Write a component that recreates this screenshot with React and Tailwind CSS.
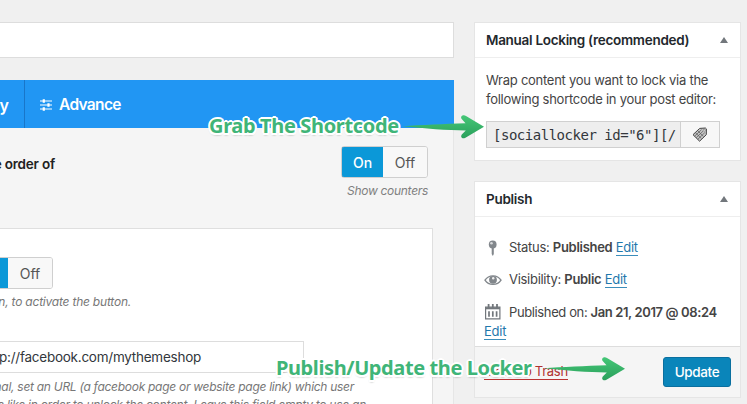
import React from "react";

function Toggle({ className = "" }) {
  return (
    <div className={`flex h-8 w-[87px] shrink-0 overflow-hidden rounded-[3px] border border-[#cfcfcf] text-[14px] ${className}`}>
      <div className="-my-px -ml-px flex w-[42px] items-center justify-center rounded-l-[3px] border border-r-0 border-[#0a6ea3] bg-[#0b98d8] font-medium text-white">
        On
      </div>
      <div className="flex flex-1 items-center justify-center bg-[#f8f8f8] text-[#555]">Off</div>
    </div>
  );
}

function Panel({ title, className = "", children }) {
  return (
    <section className={`flex w-[267px] flex-col border border-[#e5e5e5] bg-white ${className}`}>
      <header className="flex h-[35px] shrink-0 items-center justify-between border-b border-[#eeeeee] pr-[12px] pl-[11px]">
        <h2 className="pt-px text-[13.5px] font-semibold whitespace-nowrap text-[#23282d]">{title}</h2>
        <svg className="h-[6px] w-[8px]" viewBox="0 0 8 6">
          <path d="M4 0 8 6H0z" fill="#72777c" />
        </svg>
      </header>
      {children}
    </section>
  );
}

function Edit() {
  return <a className="border-b border-[#3b8dbb] text-[#1f78ac]">Edit</a>;
}

function Pin() {
  return (
    <svg className="h-[16px] w-[18px]" viewBox="0 0 18 16">
      <path d="M7.7 8h2.1v6l-1 2-1.1-2z" fill="#82878c" />
      <circle cx="8.7" cy="4.5" r="3.9" fill="#82878c" />
      <circle cx="7.5" cy="3.2" r="1.3" fill="#d6d8da" />
    </svg>
  );
}

function Eye() {
  return (
    <svg className="h-[14px] w-[18px]" viewBox="0 0 18 14" fill="none">
      <path d="M1 7.2C4.6 1.4 13.4 1.4 17 7.2 13.4 12.8 4.6 12.8 1 7.2z" stroke="#82878c" strokeWidth="1.4" />
      <circle cx="9" cy="6.8" r="3.9" fill="#82878c" />
      <circle cx="9.2" cy="5.2" r="1.2" fill="#eee" />
    </svg>
  );
}

function Calendar() {
  return (
    <svg className="-mt-[3px] h-[17px] w-[18px]" viewBox="0 0 18 17" fill="none" stroke="#72777c">
      <path d="M1.6 4.2h14.3v11.6H1.6z" strokeWidth="1.2" />
      <path d="M1.6 5.3h14.3" strokeWidth="2" />
      <path d="M4.6 1v4M8.8 1v4M13 1v4" strokeWidth="1.8" />
      <path d="M5 8.2v5.5M8.8 8.2v5.5M12.6 8.2v5.5" strokeWidth="1.7" />
    </svg>
  );
}

function Tag() {
  return (
    <svg className="h-[16px] w-[16px]" viewBox="0 0 16 16">
      <path d="M1 7.7 7.7 1.4 13.4 1l1 .9-.1 5.8L7.6 14.2z" fill="#c4c4c4" stroke="#444" strokeWidth="1" />
      <path d="m2.6 9.2 7-6.6M4.2 10.7l7-6.7M5.8 12.3l7-6.7M3.6 5.8l5.7 5.7M5.8 3.8l5.6 5.7" stroke="#555" strokeWidth=".7" />
      <circle cx="12.2" cy="3.2" r="1" fill="#fff" stroke="#555" strokeWidth=".5" />
    </svg>
  );
}

function Arrow({ className }) {
  return (
    <svg className={`absolute h-[26px] w-[82px] ${className}`} viewBox="0 0 82 26">
      <defs>
        <linearGradient id="arrowFill" x1="0" y1="0" x2="0" y2="1">
          <stop offset="0" stopColor="#45c777" />
          <stop offset="1" stopColor="#2a9f5b" />
        </linearGradient>
      </defs>
      <path
        d="M0 12.2C18 11 42 9.8 62.5 9.2L58.5 4.8C57 2 60.5.3 63 2L81 12.8 62 24C59 25.3 57 22.7 59 20.3L62.8 16.4C44 16.3 22 14.4 0 12.2z"
        fill="url(#arrowFill)"
      />
    </svg>
  );
}

const captionStyle =
  "absolute font-['Noto_Sans','Open_Sans',sans-serif] text-[20px] leading-[28px] font-bold whitespace-nowrap text-[#3fb578] [text-shadow:2px_0_#fff,-2px_0_#fff,0_2px_#fff,0_-2px_#fff,1.5px_1.5px_#fff,-1.5px_1.5px_#fff,1.5px_-1.5px_#fff,-1.5px_-1.5px_#fff,0_2px_2px_rgba(0,0,0,0.45)]";

export default function App() {
  return (
    <div className="relative flex h-[404px] w-[747px] overflow-hidden bg-[#f0f0f0] font-['Inter','Liberation_Sans',sans-serif] text-[13px] text-[#444]">
      <main className="flex w-[454px] shrink-0 flex-col pt-[22px]">
        <div className="h-[36px] shrink-0 border border-l-0 border-[#dddddd] bg-white" />
        <nav className="mt-[22px] flex h-[48px] shrink-0 bg-[#2196f3] text-[16px] font-semibold text-white">
          <div className="flex w-[25px] items-center justify-end border-r border-[#1976c9] pt-px pr-[15px] whitespace-nowrap">Visibility</div>
          <div className="flex items-center gap-[7px] pl-[15px]">
            <svg className="mt-[2px] h-[12px] w-[12px]" viewBox="0 0 12 12" stroke="white" strokeWidth="1.2">
              <path d="M0 2h12M0 6h12M0 10h12" />
              <path d="M3.8.3v3.4M8.5 4.3v3.4M3.8 8.3v3.4" strokeWidth="2.2" />
            </svg>
            <span className="pt-px text-[15.5px] tracking-[-0.65px]">Advance</span>
          </div>
        </nav>
        <div className="flex min-h-0 flex-1 flex-col border-r border-[#e6e6e6] bg-[#f5f5f5]">
          <div className="flex h-[100px] shrink-0 justify-between pt-[18px] pr-[25px]">
            <div className="flex h-[36px] w-[55px] items-center justify-end text-[13.5px] font-semibold tracking-[-0.2px] whitespace-nowrap text-[#222]">
              Set the order of
            </div>
            <div className="flex flex-col items-end">
              <Toggle />
              <p className="mt-[5px] text-[12px] leading-[16px] tracking-[-0.3px] text-[#808080] italic">Show counters</p>
            </div>
          </div>
          <div className="flex min-h-0 w-[433px] flex-1 flex-col overflow-hidden border-t border-r border-[#dfdfdf] bg-white pt-[28px]">
            <div className="flex w-[53px] justify-end">
              <Toggle />
            </div>
            <p className="mt-[5px] flex w-[131px] justify-end text-[12px] leading-[16px] tracking-[-0.22px] whitespace-nowrap text-[#777] italic">
              Set On, to activate the button.
            </p>
            <div className="mt-[31px] flex h-[32px] w-[304px] shrink-0 items-center border border-l-0 border-[#dddddd]">
              <div className="flex w-[201px] justify-end text-[13.5px] tracking-[-0.25px] whitespace-nowrap text-[#32373c]">http://facebook.com/mythemeshop</div>
            </div>
            <p className="mt-[5px] flex w-[354px] justify-end text-[12px] leading-[18px] tracking-[-0.28px] whitespace-nowrap text-[#777] italic">
              Optional, set an URL (a facebook page or website page link) which user
            </p>
            <p className="flex w-[366px] justify-end text-[12px] leading-[18px] tracking-[-0.26px] whitespace-nowrap text-[#777] italic">
              have like in order to unlock the content. Leave this field empty to use an
            </p>
          </div>
        </div>
      </main>

      <aside className="ml-[20px] flex flex-col pt-[22px] tracking-[-0.29px]">
        <Panel title="Manual Locking (recommended)" className="h-[139px]">
          <div className="flex flex-col pt-[13px] pl-[11px]">
            <p className="leading-[19px] tracking-[-0.26px] whitespace-nowrap">
              Wrap content you want to lock via the
              <br />
              following shortcode in your post editor:
            </p>
            <div className="mt-[12px] flex h-[27px] w-[234px] border border-[#d0d0d0]">
              <div className="flex w-[194px] items-center overflow-hidden border-r border-[#d0d0d0] bg-[#eeeeee] pt-[2px] pl-[6px] font-['DejaVu_Sans_Mono','Liberation_Mono',monospace] text-[14px] tracking-[-0.48px] whitespace-nowrap text-[#32373c]">
                <span className="-mr-2">[sociallocker id="6"][/</span>
              </div>
              <div className="flex flex-1 items-center justify-center bg-[#f7f7f7]">
                <Tag />
              </div>
            </div>
          </div>
        </Panel>

        <Panel title="Publish" className="mt-[20px] h-[217px]">
          <div className="flex h-[129px] shrink-0 flex-col pt-[20px] pl-[9px] whitespace-nowrap">
            <div className="flex h-[22px] items-center gap-[7px]">
              <Pin />
              <span>Status: <b className="font-semibold">Published</b> <Edit /></span>
            </div>
            <div className="mt-[10px] flex h-[22px] items-center gap-[7px]">
              <Eye />
              <span>Visibility: <b className="font-semibold">Public</b> <Edit /></span>
            </div>
            <div className="mt-[11px] flex h-[22px] items-center gap-[7px]">
              <Calendar />
              <span className="tracking-[-0.38px]">Published on: <b className="font-semibold">Jan 21, 2017 @ 08:24</b></span>
            </div>
            <div className="leading-[15px] tracking-[-0.2px]"><Edit /></div>
          </div>
          <footer className="flex flex-1 items-center justify-between border-t border-[#dddddd] bg-[#f5f5f5] pr-[9px] pl-[9px]">
            <a className="border-b border-[#b33] leading-[15px] text-[#b03030]">Move to Trash</a>
            <button className="h-[30px] w-[68px] rounded-[3px] border border-[#0a6f9f] bg-[#0a85ba] text-[13.5px] font-medium tracking-[-0.35px] text-white">
              Update
            </button>
          </footer>
        </Panel>
      </aside>

      <div className={`${captionStyle} top-[112px] left-[209px] tracking-[-0.35px]`}>Grab The Shortcode</div>
      <Arrow className="top-[114px] left-[403px]" />
      <div className={`${captionStyle} top-[354px] left-[276px] tracking-[-0.4px]`}>Publish/Update the Locker</div>
      <Arrow className="top-[356px] left-[544px]" />
    </div>
  );
}
